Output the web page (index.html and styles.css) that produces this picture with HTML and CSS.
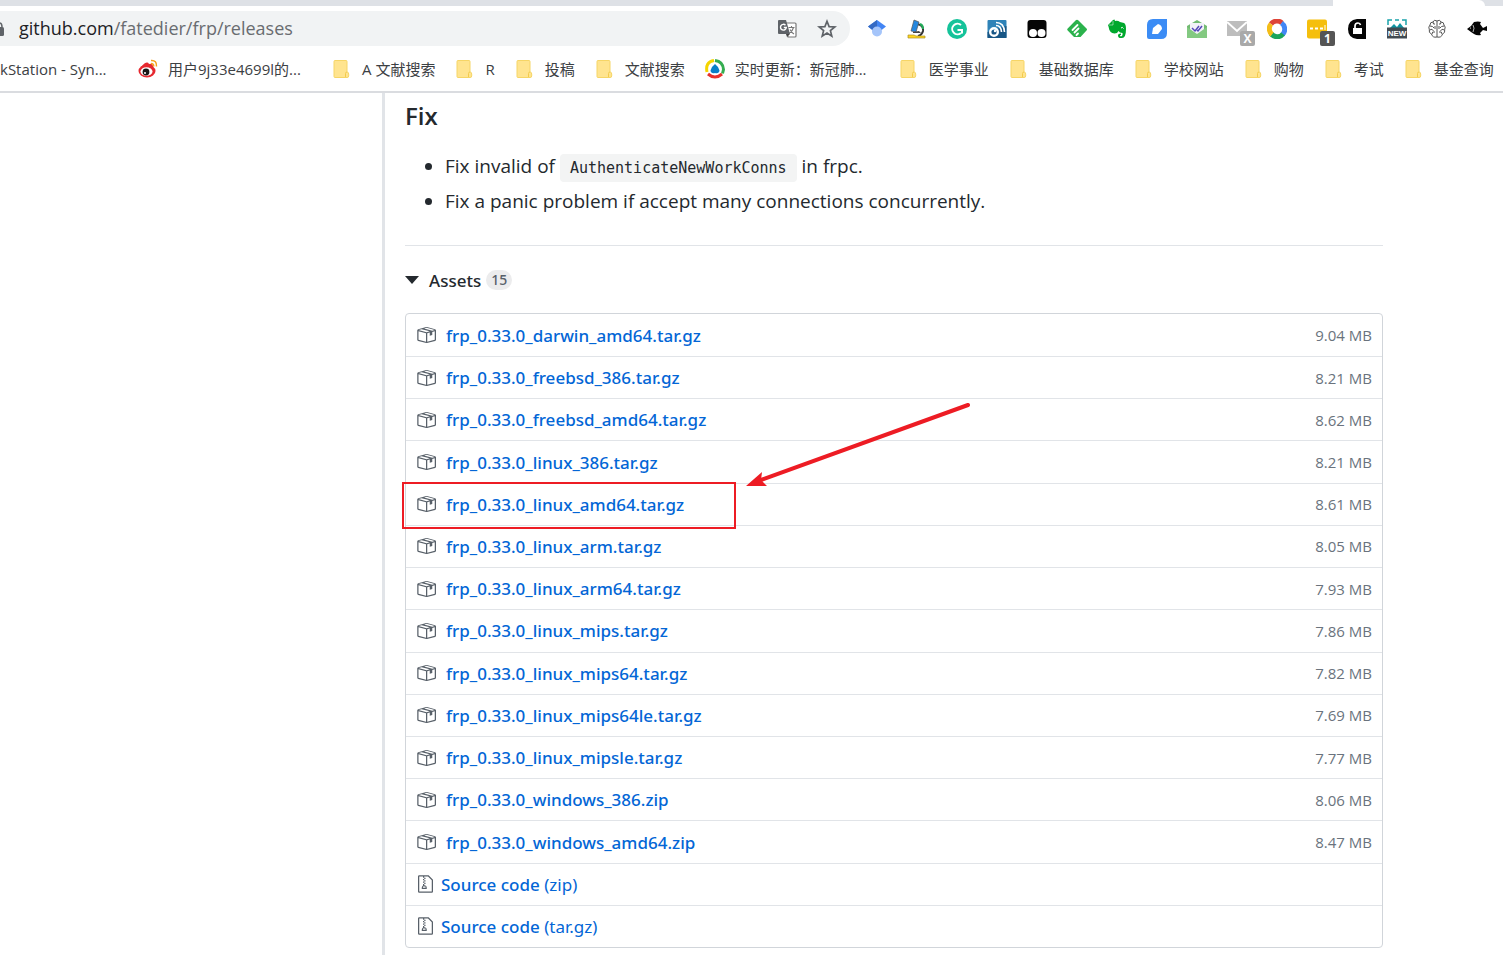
FILE: index.html
```html
<!DOCTYPE html>
<html lang="en">
<head>
<meta charset="utf-8">
<meta name="viewport" content="width=device-width, initial-scale=1">
<title>Releases · fatedier/frp</title>
<link rel="stylesheet" href="styles.css">
</head>
<body>
<svg class="defs" aria-hidden="true">
  <symbol id="package" viewBox="0 0 16 16"><path d="M1 4.27v7.47c0 .45.3.84.75.97l6.5 1.73c.16.05.34.05.5 0l6.5-1.73c.45-.13.75-.52.75-.97V4.27c0-.45-.3-.84-.75-.97l-6.5-1.74a1.4 1.4 0 0 0-.5 0L1.75 3.3c-.45.13-.75.52-.75.97zm7 9.09l-6-1.59V5l6 1.61v6.75zM2 4l2.5-.67L11 5.06l-2.5.67L2 4zm13 7.77l-6 1.59V6.61l2-.55V8.5l2-.53V5.53L15 5v6.77zm-2-7.24L6.5 2.8l2-.53L15 4l-2 .53z"/></symbol>
  <symbol id="zip" viewBox="0 0 12 16"><path d="M8.5 1H1a1 1 0 0 0-1 1v12a1 1 0 0 0 1 1h10a1 1 0 0 0 1-1V4.5L8.5 1zM11 14H1V2h3v1h1V2h3l3 3v9zM5 4V3h1v1H5zM4 4h1v1H4V4zm1 2V5h1v1H5zM4 6h1v1H4V6zm1 2V7h1v1H5zM4 9.28A2 2 0 0 0 3 11v1h4v-1a2 2 0 0 0-2-2V8H4v1.28zM6 10v1H4v-1h2z"/></symbol>
  <symbol id="folder" viewBox="0 0 20 20"><path d="M3 1.500h11a1 1 0 0 1 1 1v10.300q1.700.4 1.700 2.200v2q0 1.500-1.700 1.500H3a1 1 0 0 1-1-1v-15a1 1 0 0 1 1-1z" fill="#ffe48f" stroke="#f6d566"/><path d="M13.500 18v-3.500q0-1.500 1.500-1.500" fill="none" stroke="#f3cb4c"/></symbol>
</svg>

<header class="browser">
  <div class="tabstrip"><span class="tab"></span></div>
  <div class="toolbar">
    <div class="omnibox">
      <svg class="lock" viewBox="0 0 6 16" aria-hidden="true"><path d="M0 6h2.500q1.500 0 1.500 1.500v6q0 1.500-1.500 1.500H0z" fill="#5f6368"/><path d="M0 2q2 .5 2 4" fill="none" stroke="#5f6368" stroke-width="1.500"/></svg>
      <a class="url" href="#"><span>github.com</span>/fatedier/frp/releases</a>
      <button class="tool" aria-label="Translate"><svg viewBox="0 0 20 20"><path d="M8 4h10a1 1 0 0 1 1 1v12a1 1 0 0 1-1 1h-7z" fill="#fff" stroke="#777" stroke-width="1.200"/><path d="M11.500 8.500h6M14.500 7v1.500M16.500 8.500q-1 4-4.500 6M13 10.500q1.500 3 4 4.500" fill="none" stroke="#777" stroke-width="1.100"/><path d="M2 1h7l4 14H2a1 1 0 0 1-1-1V2a1 1 0 0 1 1-1z" fill="#5f6368"/><path d="M8.500 6.200A2.900 2.900 0 1 0 9.300 8.500H6.800" fill="none" stroke="#fff" stroke-width="1.400"/><path d="M9 15h4l-3 3z" fill="#444"/></svg></button>
      <button class="tool" aria-label="Bookmark this page"><svg viewBox="0 0 20 20"><path d="M10 2.300l2.100 5.300 5.700.4-4.400 3.600 1.400 5.500-4.800-3.100-4.800 3.100 1.400-5.500L2.200 8l5.700-.4z" fill="none" stroke="#5f6368" stroke-width="1.700"/></svg></button>
    </div>
    <div class="extensions">
      <button aria-label="Scholar"><svg viewBox="0 0 20 20"><path d="M10 1l9 6.500-5 4H6l-5-4z" fill="#4285f4"/><path d="M10 1v8q-3 0-4 2.500L1 7.500z" fill="#356ac3"/><circle cx="10" cy="12.500" r="5" fill="#a5c5fa"/></svg></button>
      <button aria-label="Microscope"><svg viewBox="0 0 20 20"><path d="M10 5q7 1 6 7-1 4-5 5" fill="none" stroke="#333" stroke-width="2"/><path d="M13 5q3 1 3 5" fill="none" stroke="#23ac5a" stroke-width="2"/><path d="M7 1l5 2-3 10-5-1z" fill="#2587df" stroke="#555" stroke-width=".7"/><path d="M6 13l6-1 2 2H6z" fill="#444"/><path d="M1 16h6l2 1h9v2H1z" fill="#ffd51c" stroke="#a99025" stroke-width=".7"/></svg></button>
      <button aria-label="Grammar"><svg viewBox="0 0 20 20"><circle cx="10" cy="10" r="10" fill="#15c39a"/><path d="M14 6a5.300 5.300 0 1 0 0 8M10.500 11H15v3.500" fill="none" stroke="#fff" stroke-width="2"/></svg></button>
      <button aria-label="Feed finder"><svg viewBox="0 0 20 20"><rect x=".5" y="1" width="19" height="18" rx="1" fill="#2f83b8"/><path d="M.5 13l19-6v12H.5z" fill="#185685"/><circle cx="7" cy="13" r="3.800" fill="none" stroke="#fff" stroke-width="2.400"/><circle cx="8" cy="12" r="1.200" fill="#fff"/><path d="M9 6.500q5 0 5.500 6.500M9 3.500q8 0 8.500 9.500" fill="none" stroke="#fff" stroke-width="1.600"/></svg></button>
      <button aria-label="Script manager"><svg viewBox="0 0 20 20"><rect x=".5" y="1" width="19" height="18" rx="3" fill="#050505"/><circle cx="6" cy="14" r="4" fill="#fff"/><circle cx="14.500" cy="14" r="4" fill="#fff"/></svg></button>
      <button aria-label="Feedly"><svg viewBox="0 0 20 20"><path d="M8.500 1.500q1.500-1.500 3 0l8 8q1 1 0 2l-6 6.500H7L.700 11.500q-1-1 0-2z" fill="#2bb24c"/><path d="M5.500 11l5-5M7.500 13.500l4-4M9.500 16l1.500-1.500" stroke="#fff" stroke-width="1.800" stroke-linecap="round"/></svg></button>
      <button aria-label="Evernote"><svg viewBox="0 0 20 20"><path d="M1 6l5-5 1.500-.5L8 2q3-.6 5 1l4 1q2 1 2 6 0 9-4 9-4 .5-4-2.500 0-2 3-2v1.500q-1.500 0-1 1 .5.700 2 0 .8-1 .5-3-3 0-4-2-1 2.500-4 2.500-5 0-6-7z" fill="#00a82d"/><path d="M6 2v4H2" fill="none" stroke="#fff" stroke-width=".5"/><path d="M14 9q1.500-1.500 2.500.5" fill="none" stroke="#fff"/></svg></button>
      <button aria-label="Notes"><svg viewBox="0 0 20 20"><path d="M6 0h14v14q0 6-6 6H2q-2 0-2-2V6q0-6 6-6z" fill="#3b8cf5"/><path d="M5 15l1-6 5-4q4 1 4 5l-4 5z" fill="#fff"/></svg></button>
      <button aria-label="Mail tracker"><svg viewBox="0 0 20 20"><path d="M0 7l10-6 10 6v12H0z" fill="#72ba72"/><path d="M3 4h14v8l-7 4-7-4z" fill="#f2f1f8"/><path d="M5 9l3 3 4-5M10 11l1 1 4-5" fill="none" stroke="#5547b9" stroke-width="1.500"/><path d="M0 8l10 7 10-7v11H0z" fill="#83c981"/></svg></button>
      <button aria-label="Mail checker"><svg viewBox="0 0 20 20"><path d="M0 2h20v15H0z" fill="#bdbdbd"/><path d="M0 3l10 9 10-9" fill="none" stroke="#fff" stroke-width="2"/></svg><span class="badge muted">X</span></button>
      <button aria-label="Color ring"><svg viewBox="0 0 20 20" fill="none" stroke-width="5"><path d="M4 5a7.500 7.500 0 0 1 11-1" stroke="#de4437"/><path d="M14.500 4a7.500 7.500 0 0 1 1 11.500" stroke="#4286f5"/><path d="M16 15A7.500 7.500 0 0 1 4 14.500" stroke="#1ba45b"/><path d="M5 15.500A7.500 7.500 0 0 1 4 5" stroke="#f4bd18"/></svg></button>
      <button aria-label="Messages"><svg viewBox="0 0 20 20"><rect width="20" height="19" y=".5" rx="2" fill="#f5bf0d"/><path d="M3 9.500h3M8 9.500h3M13 9.500h3" stroke="#fff" stroke-width="2.200"/><path d="M18 6v5" stroke="#fff"/></svg><span class="badge">1</span></button>
      <button aria-label="Unlock"><svg viewBox="0 0 20 20"><path d="M10 0h9v20h-9q-9-1-9-10t9-10z" fill="#050505"/><path d="M6 9h9v6H6z" fill="#fff"/><path d="M8 9V7q0-3 3-3 2 0 2.500 2" fill="none" stroke="#fff" stroke-width="1.700"/></svg></button>
      <button aria-label="New capture"><svg viewBox="0 0 20 20"><path d="M1 6V1h4M8 1h4M15 1h4v5" fill="none" stroke="#1aa3ab" stroke-width="1.500"/><path d="M3 9l4-4 3 3 3-4 4 5z" fill="#0e93a2"/><path d="M0 8.500h20v11H0z" fill="#424b52"/></svg><span class="newtext">NEW</span></button>
      <button aria-label="Brain"><svg viewBox="0 0 20 20" fill="none" stroke="#555"><path d="M10 2q-3-2-4 1-3 0-3 3-2 2-.7 4.500Q1.500 14 4.500 15q1 4 5.500 3 4.500 1 5.500-3 3-1 2.200-4.500Q19 8 17 6q0-3-3-3-1-3-4-1zm0 0v16M6 3q0 3 2 2M3 7q3 0 4 2M2.500 11q3-2 4 1M5 15q0-3 3-2M14 3q0 3-2 2M17 7q-3 0-4 2M17.500 11q-3-2-4 1M15 15q0-3-3-2M8 7v3M12 7v3"/></svg></button>
      <button aria-label="Fish"><svg viewBox="0 0 20 20"><path d="M0 10l4-3 3-4q4-1 7 0l-1 2 3 4 4-2v5l-4-1-3 3 1 2q-4 1-7-1l-3-2z" fill="#050505"/><path d="M6 6q2 3 0 7" fill="none" stroke="#fff" stroke-width=".7"/><circle cx="3.500" cy="9" r=".6" fill="#fff"/></svg></button>
    </div>
  </div>
  <nav class="bookmarks" aria-label="Bookmarks">
    <a class="cut first" href="#"><span>kStation - Syn...</span></a>
    <a class="cut" href="#"><svg viewBox="0 0 20 20"><ellipse cx="9" cy="12" rx="8.500" ry="6.500" fill="#e6282f"/><path d="M3 8q6-7 8-3 4-1 4 3" fill="#e6282f"/><ellipse cx="8.500" cy="12.500" rx="6" ry="4.300" fill="#fff"/><circle cx="8" cy="13" r="3.400" fill="#171717"/><circle cx="7" cy="14" r="1" fill="#fff"/><path d="M13 1.500q6-.5 5.500 6M13 4.500q3 0 2.700 3" fill="none" stroke="#f5a11c" stroke-width="1.500"/></svg><span>用户9j33e4699l的...</span></a>
    <a href="#"><svg><use href="#folder"/></svg><span>A 文献搜索</span></a>
    <a href="#"><svg><use href="#folder"/></svg><span>R</span></a>
    <a href="#"><svg><use href="#folder"/></svg><span>投稿</span></a>
    <a href="#"><svg><use href="#folder"/></svg><span>文献搜索</span></a>
    <a class="cut" href="#"><svg viewBox="0 0 20 20" fill="none" stroke-width="3"><circle cx="10" cy="10" r="8" fill="#fff" stroke="none"/><path d="M2 13Q0 3 9 1.500" stroke="#f5d500"/><path d="M10 1.500q8 1 8.500 9l-1 4" stroke="#35ad50"/><path d="M3 15q7 6 14 0" stroke="#e6312b"/><path d="M10 5q3 2 4.500 6.500Q14 15 10 14q-4 1-4.500-2.500Q7 7 10 5z" fill="#087fc7"/></svg><span>实时更新：新冠肺...</span></a>
    <a href="#"><svg><use href="#folder"/></svg><span>医学事业</span></a>
    <a href="#"><svg><use href="#folder"/></svg><span>基础数据库</span></a>
    <a href="#"><svg><use href="#folder"/></svg><span>学校网站</span></a>
    <a href="#"><svg><use href="#folder"/></svg><span>购物</span></a>
    <a href="#"><svg><use href="#folder"/></svg><span>考试</span></a>
    <a href="#"><svg><use href="#folder"/></svg><span>基金查询</span></a>
  </nav>
</header>

<main class="page">
  <section class="release">
    <h3>Fix</h3>
    <ul class="notes">
      <li>Fix invalid of <code>AuthenticateNewWorkConns</code> in frpc.</li>
      <li>Fix a panic problem if accept many connections concurrently.</li>
    </ul>
    <button class="toggle" aria-expanded="true"><span class="caret"></span>Assets <span class="count">15</span></button>
    <ul class="assets">
      <li><a href="#"><svg><use href="#package"/></svg>frp_0.33.0_darwin_amd64.tar.gz</a><small>9.04 MB</small></li>
      <li><a href="#"><svg><use href="#package"/></svg>frp_0.33.0_freebsd_386.tar.gz</a><small>8.21 MB</small></li>
      <li><a href="#"><svg><use href="#package"/></svg>frp_0.33.0_freebsd_amd64.tar.gz</a><small>8.62 MB</small></li>
      <li><a href="#"><svg><use href="#package"/></svg>frp_0.33.0_linux_386.tar.gz</a><small>8.21 MB</small></li>
      <li class="marked"><a href="#"><svg><use href="#package"/></svg>frp_0.33.0_linux_amd64.tar.gz</a><small>8.61 MB</small>
        <span class="frame"></span>
        <svg class="arrow" viewBox="0 0 226 86" aria-hidden="true"><path d="M222 3L15 78" stroke="#ed1c24" stroke-width="4" stroke-linecap="round"/><path d="M0 84L16 70l-1 8 6 6z" fill="#ed1c24"/></svg></li>
      <li><a href="#"><svg><use href="#package"/></svg>frp_0.33.0_linux_arm.tar.gz</a><small>8.05 MB</small></li>
      <li><a href="#"><svg><use href="#package"/></svg>frp_0.33.0_linux_arm64.tar.gz</a><small>7.93 MB</small></li>
      <li><a href="#"><svg><use href="#package"/></svg>frp_0.33.0_linux_mips.tar.gz</a><small>7.86 MB</small></li>
      <li><a href="#"><svg><use href="#package"/></svg>frp_0.33.0_linux_mips64.tar.gz</a><small>7.82 MB</small></li>
      <li><a href="#"><svg><use href="#package"/></svg>frp_0.33.0_linux_mips64le.tar.gz</a><small>7.69 MB</small></li>
      <li><a href="#"><svg><use href="#package"/></svg>frp_0.33.0_linux_mipsle.tar.gz</a><small>7.77 MB</small></li>
      <li><a href="#"><svg><use href="#package"/></svg>frp_0.33.0_windows_386.zip</a><small>8.06 MB</small></li>
      <li><a href="#"><svg><use href="#package"/></svg>frp_0.33.0_windows_amd64.zip</a><small>8.47 MB</small></li>
      <li><a class="source" href="#"><svg><use href="#zip"/></svg><span>Source code <i>(zip)</i></span></a></li>
      <li><a class="source" href="#"><svg><use href="#zip"/></svg><span>Source code <i>(tar.gz)</i></span></a></li>
    </ul>
  </section>
</main>
</body>
</html>
```

FILE: styles.css
```css
* { box-sizing: border-box; }

body {
  margin: 0;
  min-height: 100vh;
  display: flex;
  flex-direction: column;
  overflow-x: hidden;
  background: #fff;
  color: #24292e;
  font-family: "Open Sans", "Noto Sans CJK SC", sans-serif;
  font-size: 19px;
}

a { color: inherit; text-decoration: none; }
button { border: 0; padding: 0; background: none; color: inherit; font: inherit; }
svg { display: block; flex: none; }
.defs { position: absolute; width: 0; height: 0; }

/* Browser chrome */
.browser { border-bottom: 2px solid #dadce0; }
.tabstrip { height: 6px; display: flex; justify-content: flex-end; background: #dee1e6; padding-right: 18px; }
.tab { width: 152px; background: #fff; border-radius: 0 6px 0 0; }
.toolbar { display: flex; align-items: center; padding: 5px 16px 0 0; }
.omnibox {
  flex: 1;
  height: 35px;
  display: flex;
  align-items: center;
  gap: 20px;
  padding-right: 13px;
  background: #f1f3f4;
  border-radius: 0 18px 18px 0;
}
.lock { width: 6px; height: 16px; }
.url { flex: 1; margin-left: -7px; padding-bottom: 2px; color: #696c70; font-size: 18px; }
.url span { color: #202124; }
.tool svg, .extensions svg { width: 20px; height: 20px; }
.extensions { display: flex; gap: 20px; padding-left: 17px; }
.extensions button { position: relative; }
.badge {
  position: absolute;
  left: 13px;
  top: 12px;
  width: 15px;
  height: 15px;
  border-radius: 2px;
  background: #555;
  color: #fff;
  font-size: 12px;
  font-weight: 700;
  line-height: 15px;
}
.badge.muted { background: #a9a9a9; }
.newtext {
  position: absolute;
  inset: 9px 0 0;
  color: #fff;
  font: 700 8px/11px "Liberation Sans", sans-serif;
}

.bookmarks { height: 45px; display: flex; align-items: center; gap: 20px; color: #3c4043; font-size: 15px; white-space: nowrap; }
.bookmarks a { display: flex; align-items: center; gap: 10px; flex: none; }
.bookmarks svg { width: 20px; height: 20px; }
.cut span { width: 144px; }
.cut.first span { width: 118px; }

/* Release */
.page { flex: 1; display: flex; margin-left: 382px; border-left: 3px solid #e1e4e8; }
.release { flex: 1; display: flex; flex-direction: column; align-items: stretch; padding: 8px 120px 7px 20px; }
h3 { margin: 0 0 20px; font-size: 24px; font-weight: 600; line-height: 30px; }
.notes { margin: 0; padding: 0 0 29px 40px; border-bottom: 1px solid #e1e4e8; line-height: 30px; }
.notes li + li { margin-top: 5px; }
code {
  padding: 5px 10px;
  border-radius: 4px;
  background: #f3f4f4;
  font-family: "DejaVu Sans Mono", monospace;
  font-size: 15px;
  line-height: 20px;
}
.toggle { display: flex; align-items: center; gap: 5px; margin: 19px 0 18px; height: 30px; font: 500 17px "Noto Sans", sans-serif; }
.caret { margin-right: 5px; border: 7px solid transparent; border-top: 8px solid #24292e; border-bottom: 0; }
.count { padding: 0 5px; border-radius: 10px; background: #ececed; color: #586069; font-size: 14px; line-height: 20px; }

.assets { flex: 1; display: flex; flex-direction: column; margin: 0; padding: 0; list-style: none; border: 1px solid #d1d5da; border-radius: 4px; }
.assets li { flex: 1; min-height: 42px; display: flex; align-items: center; justify-content: space-between; padding: 0 10px; }
.assets li + li { border-top: 1px solid #e1e4e8; }
.assets a { display: flex; align-items: center; gap: 10px; color: #0366d6; font: 500 17px "Noto Sans", sans-serif; }
.assets a svg { width: 20px; height: 20px; fill: #586069; }
.assets .source { gap: 8px; padding-left: 2px; }
.assets .source svg { width: 15px; }
.assets i { font-style: normal; font-weight: 400; }
small { color: #6a737d; font-size: 15px; }

.marked { position: relative; }
.frame { position: absolute; left: -4px; top: -2px; bottom: -4px; width: 334px; border: 2px solid #ed1c24; }
.arrow { position: absolute; left: 340px; bottom: 37px; width: 226px; height: 86px; }
```
